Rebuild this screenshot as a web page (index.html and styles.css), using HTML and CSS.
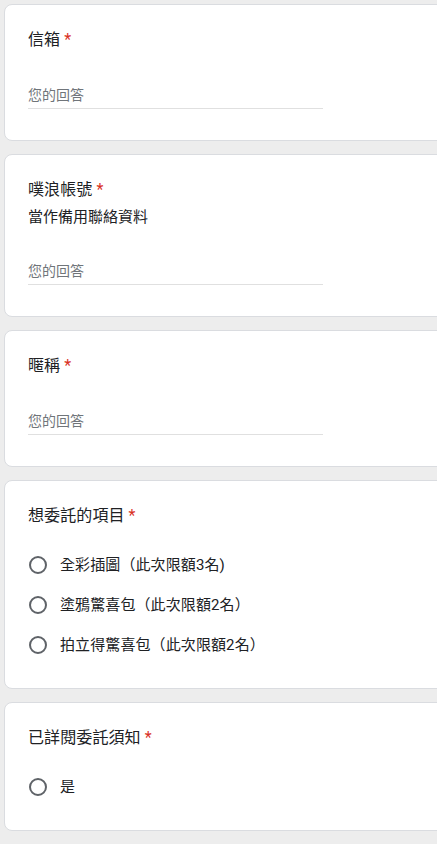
FILE: index.html
```html
<!DOCTYPE html>
<html lang="zh-Hant">
<head>
<meta charset="utf-8">
<title>表單</title>
<link rel="stylesheet" href="styles.css">
</head>
<body>
<main class="page">
  <section class="card">
    <div class="title">信箱<span class="req">*</span></div>
    <div class="input">您的回答</div>
  </section>
  <section class="card">
    <div class="title">噗浪帳號<span class="req">*</span></div>
    <div class="desc">當作備用聯絡資料</div>
    <div class="input">您的回答</div>
  </section>
  <section class="card">
    <div class="title">暱稱<span class="req">*</span></div>
    <div class="input">您的回答</div>
  </section>
  <section class="card card-choice">
    <div class="title">想委託的項目<span class="req">*</span></div>
    <div class="options">
      <div class="option"><span class="radio"></span><span class="label">全彩插圖（此次限額3名)</span></div>
      <div class="option"><span class="radio"></span><span class="label">塗鴉驚喜包（此次限額2名）</span></div>
      <div class="option"><span class="radio"></span><span class="label">拍立得驚喜包（此次限額2名）</span></div>
    </div>
  </section>
  <section class="card card-choice">
    <div class="title">已詳閱委託須知<span class="req">*</span></div>
    <div class="options">
      <div class="option"><span class="radio"></span><span class="label">是</span></div>
    </div>
  </section>
</main>
</body>
</html>
```

FILE: styles.css
```css
html, body {
  margin: 0;
  padding: 0;
  overflow: hidden;
  background: #ededed;
}
body {
  font-family: Roboto, "Noto Sans CJK TC", "Noto Sans CJK SC", sans-serif;
  color: #202124;
}
.page {
  display: flex;
  flex-direction: column;
  gap: 13px;
  padding: 4px 0 0 4px;
}
.card {
  width: 520px;
  box-sizing: border-box;
  background: #fff;
  border: 1px solid #dadce0;
  border-radius: 8px;
  padding: 23px 23px 31px 23px;
}
.card-choice {
  padding-bottom: 23px;
}
.title {
  font-size: 16px;
  line-height: 24px;
  letter-spacing: 0.1px;
  color: #202124;
}
.req {
  color: #d93025;
  margin-left: 4px;
}
.desc {
  margin-top: 4px;
  font-size: 15px;
  line-height: 22px;
  color: #202124;
}
.input {
  margin-top: 24px;
  width: 295px;
  padding: 9px 0 3px 0;
  font-size: 14px;
  line-height: 20px;
  color: #70757a;
  border-bottom: 1px solid #e0e0e0;
}
.options {
  margin-top: 17px;
  display: flex;
  flex-direction: column;
}
.option {
  height: 40px;
  display: flex;
  align-items: center;
}
.radio {
  width: 18px;
  height: 18px;
  box-sizing: border-box;
  border: 2px solid #5f6368;
  border-radius: 50%;
  margin-left: 1px;
  margin-right: 13px;
  flex: none;
}
.label {
  font-size: 15px;
  line-height: 20px;
  letter-spacing: 0.1px;
  color: #202124;
}
```
